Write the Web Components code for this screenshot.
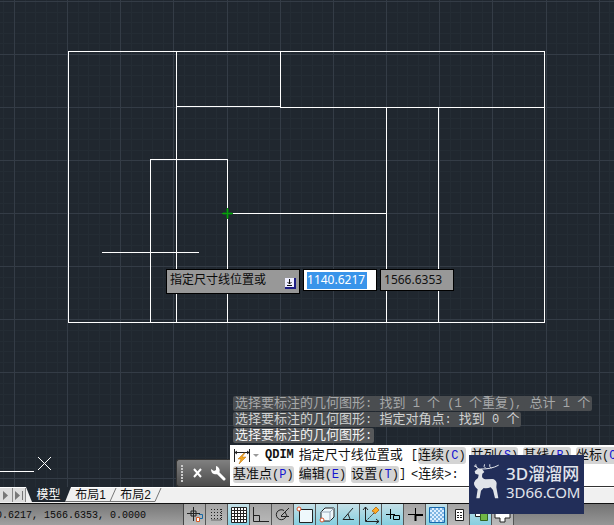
<!DOCTYPE html>
<html lang="zh">
<head>
<meta charset="utf-8">
<title>CAD</title>
<style>
html,body{height:100%;margin:0;overflow:hidden}
body{font-family:"Noto Sans","Noto Sans CJK SC",sans-serif}
</style>
</head>
<body>
<cad-app></cad-app>
<script>
const define=(name,html,init)=>{
  const t=document.createElement('template');t.innerHTML=html;
  customElements.define(name,class extends HTMLElement{
    constructor(){super();this.attachShadow({mode:'open'}).append(t.content.cloneNode(true));}
    connectedCallback(){if(init)init(this.shadowRoot,this);}
  });
};

/* model space with grid and wall outlines */
define('cad-drawing',`<style>
:host{display:block;background:#20272f;overflow:hidden}
svg{display:block;width:100%;height:100%;shape-rendering:crispEdges}
.w{stroke:#fff;fill:none}.minor{stroke:#242c34}.major{stroke:#343c46}
</style>
<svg><g class="minor"></g><g class="major"></g>
<g class="w">
<path d="M68.5 51.5H544.5V322.5H68.5ZM176.5 51V322M280.5 51V107M176 106.5H281M280 107.5H544M150.5 322V159.5H227.5V322M227 213.5H386M386.5 107V322M438.5 107V322M102 252.5H199M0 471.5H34"/>
<path d="M38 457l13 13M51 457l-13 13" shape-rendering="geometricPrecision"/></g>
<path d="M223 213.5H232M227.5 209V218" stroke="#0c5a1c" stroke-width="3"/>
<path d="M222 213.5H233M227.5 208V219" stroke="#0aa00a"/></svg>`,(root)=>{
  const ns='http://www.w3.org/2000/svg',minor=root.querySelector('.minor'),major=root.querySelector('.major');
  const line=(g,d)=>{const p=document.createElementNS(ns,'path');p.setAttribute('d',d);g.append(p);};
  for(let i=-5;i<250;i++){
    const g=i%5===0?major:minor,x=Math.round(14+i*10.63),y=Math.round(1+i*10.61);
    line(g,'M'+(x+.5)+' 0V2000');line(g,'M0 '+(y+.5)+'H2600');
  }
});

define('coord-prompt',`<style>
:host{display:flex;align-items:flex-start;gap:3px;font:12px/22px "Noto Sans","Noto Sans CJK SC",sans-serif;color:#0a0a0a}
.label{display:flex;align-items:center;gap:19px;background:#989898;border:1px solid #000;padding:0 3px;height:23px}
label{line-height:20px;padding-bottom:3px}
button{padding:0;margin:4px 0 0;width:11px;height:11px;border:0;background:none;display:flex}
input{box-sizing:border-box;width:74px;height:22px;border:1px solid #000;border-radius:0;padding:0 3px;font:inherit;background:#989898;color:#111;outline:0}
.field{display:flex;align-items:center;box-sizing:border-box;width:74px;height:22px;border:1px solid #000;padding:0 3px;background:#fff}
.field input{width:60px;height:17px;border:0;padding:0;background:#3994ea;color:#fff}
</style>
<div class="label"><label for="x">指定尺寸线位置或</label><button aria-label="选项"><svg width="11" height="11"><path d="M0 0H11V11H0z" fill="#1b1b83"/><path d="M0 0H9V9H0z" fill="#eef"/><path d="M4.500 1v5M2.500 4l2 2 2-2M2 7.500H7" stroke="#111" fill="none"/></svg></button></div>
<div class="field"><input id="x" value="1140.6217"></div>
<input aria-label="Y" value="1566.6353">`);

/* Chinese runs are set one size up from the monospaced Latin beside them */
define('command-history',`<style>
:host{display:flex;flex-direction:column;align-items:flex-start;gap:1px;font:12px/15px "Liberation Mono","Noto Sans CJK SC",monospace}
div{background:#4a4d50;color:#a6a8a9;border-radius:2px;padding:0 2px;white-space:pre;height:15px}
div:nth-of-type(2){color:#cfd1d1}div:nth-of-type(3){color:#f4f4f4;background:#57595b}
span{font:13px/15px "Liberation Mono","Noto Sans CJK SC",sans-serif}
</style>`,(root)=>{
  for(const text of ['选择要标注的几何图形: 找到 1 个 (1 个重复), 总计 1 个','选择要标注的几何图形: 指定对角点: 找到 0 个','选择要标注的几何图形:']){
    const row=document.createElement('div');
    row.innerHTML=text.replace(/[\u4e00-\u9fff]+/g,'<span>$&</span>');
    root.append(row);
  }
});

define('cmd-option',`<style>
:host{display:inline-flex}
button{font:inherit;line-height:17px;color:#111;background:#d4d4d4;border:0;border-radius:3px;padding:0;margin:0;white-space:nowrap;height:17px}
span{font:13px/17px "Liberation Mono","Noto Sans CJK SC",sans-serif}
b{font-weight:400;color:#1414d0}
</style><button><span><slot></slot></span>(<b></b>)</button>`,(root,el)=>{root.querySelector('b').textContent=el.getAttribute('key');});

define('command-line',`<style>
:host{display:flex;align-items:flex-end}
.grip{display:flex;align-items:center;box-sizing:border-box;width:54px;height:28px;padding:0 4px;gap:9px;background:linear-gradient(#808080,#4c4c4c);border:1px solid #333;border-right:0;border-radius:3px 0 0 3px}
.grip button{border:0;background:none;padding:0;display:flex}
.grip svg{display:block}
.body{flex:1;min-width:0;background:#fff;border-bottom:1px solid #333;box-sizing:border-box;height:42px;padding:1px 3px;overflow:hidden;font:12px/17px "Liberation Mono","Noto Sans CJK SC",monospace;color:#111}
.row{display:flex;align-items:center;gap:5px;white-space:nowrap;height:19px}
.row svg{flex:none}
.zh{font:13px/17px "Liberation Mono","Noto Sans CJK SC",sans-serif}
.group{display:flex}
.first{margin-left:3px}
</style>
<div class="grip"><svg width="6" height="18"><path d="M1 1V18M4 1V18" stroke="#ccc" stroke-width="2" stroke-dasharray="2 1"/></svg>
<button aria-label="关闭"><svg width="9" height="10"><path d="M1 1l7 8M8 1L1 9" stroke="#fff" stroke-width="2"/></svg></button>
<button aria-label="自定义"><svg width="15" height="15"><path d="M6 6l7 7" stroke="#fff" stroke-width="3" stroke-linecap="round"/><path d="M5 0L5 4 3 5 0 3C0 8 4 9 7 8 10 6 9 1 5 0" fill="#fff"/></svg></button></div>
<div class="body"><div class="row"><svg width="27" height="17"><path d="M1.500 2V15M16.500 2V15M2 5.500H16M4 4L2 5.500 4 7M14 4l2 1.500L14 7" stroke="#222" fill="none"/><path d="M11 6L5 12h3l-2 5 7-7h-4l3-4z" fill="#f4a51c" stroke="#b56f10" stroke-width=".5"/><path d="M20 7h6l-3 3z" fill="#999"/></svg><strong>QDIM</strong><span class="zh">指定尺寸线位置或</span><span class="group first">[<cmd-option key="C">连续</cmd-option></span><cmd-option key="S">并列</cmd-option><cmd-option key="B">基线</cmd-option><cmd-option key="O">坐标</cmd-option></div>
<div class="row"><cmd-option key="P">基准点</cmd-option><cmd-option key="E">编辑</cmd-option><span class="group"><cmd-option key="T">设置</cmd-option>]</span><span>&lt;<span class="zh">连续</span>&gt;:</span></div></div>`);

define('layout-tabs',`<style>
:host{display:flex;height:16px;background:#f0f0f0;border-top:1px solid #fff;box-sizing:border-box;font:12px/15px "Liberation Sans","Noto Sans CJK SC",sans-serif}
nav{display:flex;height:14px;isolation:isolate}
button{font:inherit;border:0;margin:0;padding:0;background:none;color:#111}
.step{width:13px;box-sizing:border-box;border-right:1px solid #888;background:#ddd;display:flex;align-items:center;justify-content:center}
.tab{position:relative;box-sizing:border-box;width:45px;padding-right:6px;line-height:14px;display:flex;justify-content:center;align-items:center}
.tab svg{position:absolute;inset:0;z-index:-1;overflow:visible}
.tab.on{color:#fff;padding-right:0}
</style><nav><button class="step" aria-label="下一个"><svg width="6" height="9"><path d="M0 0l5 4.500L0 9z" fill="#777"/></svg></button><button class="step" aria-label="最后"><svg width="9" height="9"><path d="M0 0l5 4.500L0 9zM7 0h1V9H7z" fill="#777"/></svg></button>
<button class="tab on">模型<svg width="45" height="14"><path d="M0 -1H45L39 14H6z" fill="#20272f"/></svg></button><button class="tab">布局1<svg width="45" height="14"><path d="M-6 13.500H39L45 0" stroke="#777" fill="none"/></svg></button><button class="tab">布局2<svg width="45" height="14"><path d="M-6 13.500H39L45 0" stroke="#777" fill="none"/></svg></button></nav>`);

define('status-bar',`<style>
:host{display:flex;height:22px;box-sizing:border-box;border-top:1px solid #111;background:linear-gradient(#747474,#969696);overflow:hidden}
output{width:184px;box-sizing:border-box;padding:1px 37px 0 0;font:10px/22px "Liberation Mono",monospace;color:#0a0a0a;white-space:nowrap;overflow:hidden;background:linear-gradient(#787878,#a0a0a0);border-right:1px solid #444;display:flex;justify-content:flex-end}
button{box-sizing:border-box;width:22px;padding:0;border:0;border-right:1px solid #555;background:linear-gradient(#a4a4a4,#bababa);display:flex;align-items:center;justify-content:center}
.on{background:linear-gradient(#c4dfe6,#86cfe0)}
svg{fill:none;stroke:#222}
</style><output>0.6217, 1566.6353, 0.0000</output>`,(root)=>{
  const icons=[
   ['推断约束',0,'<path d="M7.500 1V15M1 7.500H14M5 5h5v5H5z"/><path d="M10.500 11.500h3v4h-3z" fill="#fff" stroke="#d65b28"/><path d="M13 8.500h3.500v4H14" stroke="#1768a5"/>'],
   ['捕捉',0,'<path d="M3 3.500h12M3 6.500h12M3 9.500h12M3 12.500h12" stroke-dasharray="1 2"/><path d="M13.500 3V14H3" stroke-dasharray="1 1"/>'],
   ['栅格',1,'<path d="M1.500 1.500h15v15h-15zM4.500 1V16M7.500 1V16M10.500 1V16M13.500 1V16M1 4.500h16M1 7.500h16M1 10.500h16M1 13.500h16" fill="#fff"/>'],
   ['正交',0,'<path d="M1.500 1V15.500H17M2 9.500H7.500V15"/>'],
   ['极轴',0,'<path d="M10 4.500a5 5 0 1 0 2 6M7 10L15 2M7 10.500h8M11 6l2 4"/>'],
   ['对象捕捉',1,'<path d="M3.500 3.500h13v13h-13z" fill="#eef8fc"/><circle cx="3" cy="3" r="2" fill="#fff" stroke="#dd542c"/>'],
   ['三维捕捉',1,'<path d="M3 6l4-4h9v9l-4 4H3z" fill="#eef8fc"/><path d="M12 15V6l4-4M3 6h9" stroke="#9ab"/><circle cx="4" cy="14" r="2" fill="#fff" stroke="#dd542c"/>'],
   ['追踪',1,'<path d="M13 2L3 13.500H14M8 8l2 5"/>'],
   ['动态坐标',1,'<path d="M3.500 1V15.500H17M1 4l2.500-3L6 4M14 13l3 2.500-3 2"/><path d="M4 15L14 5" stroke-dasharray="2 1"/><path d="M10 5l4-4 3 3-4 4-1-2z" fill="#ffac25" stroke="#bd751f"/>'],
   ['动态输入',1,'<path d="M6.500 3v10M2 8.500h9M9.500 9.500h6v4h-6z" stroke="#000"/>'],
   ['线宽',0,'<path d="M2 8.500h15M9.500 2V15" stroke="#000"/><path d="M9.500 8v7M10 9h7" stroke="#000" stroke-width="2"/>'],
   ['透明度',1,'<defs><pattern id="p" width="4" height="4" patternUnits="userSpaceOnUse"><path d="M0 0h2v2H0zM2 2h2v2H2z" fill="#7fb5e2" stroke="none"/></pattern></defs><path d="M1.500 1.500h15v15h-15z" fill="#dceeff" stroke="none"/><path d="M1.500 1.500h15v15h-15z" fill="url(#p)" stroke="#1769ae"/>'],
   ['快捷特性',0,'<path d="M5.500 3.500h8v11h-8zM7 6.500h2M10 6.500h2M7 9.500h2M10 9.500h2M7 11.500h2M10 11.500h2" fill="#fff"/>'],
   ['选择循环',1,'<path d="M3.500 1.500h9v9h-9z" fill="#fff"/><path d="M8.500 7.500h7v7h-7z" fill="#70b746" stroke="#34671f"/>'],
   ['注释',0,'<path d="M6 2h5v5h5v5h-5v4H6v-4H1V7h5z" fill="#fff"/>']];
  for(const [name,on,art] of icons){const b=document.createElement('button');b.ariaLabel=name;if(on)b.className='on';b.innerHTML='<svg width="18" height="18">'+art+'</svg>';root.append(b);}
});

define('brand-mark',`<style>
:host{display:flex;align-items:center;gap:7px;box-sizing:border-box;width:115px;height:59px;padding:0 4px 6px;background:#222e59;color:#e1e4ec;font-family:"Noto Sans","Noto Sans CJK SC",sans-serif}
svg{flex:none;fill:#e1e4e9;stroke:#e1e4e9;stroke-linecap:round}.t{display:flex;flex-direction:column}
b{font-size:17px;line-height:20px;font-weight:500;white-space:nowrap}small{font-size:15px;line-height:16px;white-space:nowrap}
</style><svg width="26" height="35" viewBox="0 0 78 105"><path stroke="none" d="M5 22L16 13 27 15 34 24 28 29 27 37Q28 45 38 46L58 45Q68 46 71 57L70 70 76 103H66L60 78 53 70Q42 74 32 72L24 80 20 103H10L14 76Q2 66 3 56Q5 48 15 42L17 32 7 29Z"/><path fill="none" stroke-width="3" d="M16 14Q5 10 8 2M24 15Q54 16 76 4M38 13Q30 8 34 2M54 12Q48 8 50 2M10 8L4 6"/></svg><div class="t"><b>3D溜溜网</b><small>3D66.COM</small></div>`);

define('cad-app',`<style>
:host{display:flex;flex-direction:column;height:100%;position:relative;overflow:hidden}
cad-drawing{flex:1;min-height:0}layout-tabs,status-bar{flex:none}
coord-prompt,command-history,command-line,brand-mark{position:absolute}
coord-prompt{left:166px;top:269px}
command-history{left:233px;bottom:82px}
command-line{left:176px;right:0;bottom:38px}
brand-mark{left:469px;bottom:11px}
</style><cad-drawing></cad-drawing><layout-tabs></layout-tabs><status-bar></status-bar><coord-prompt></coord-prompt><command-history></command-history><command-line></command-line><brand-mark></brand-mark>`);
</script>
</body>
</html>
